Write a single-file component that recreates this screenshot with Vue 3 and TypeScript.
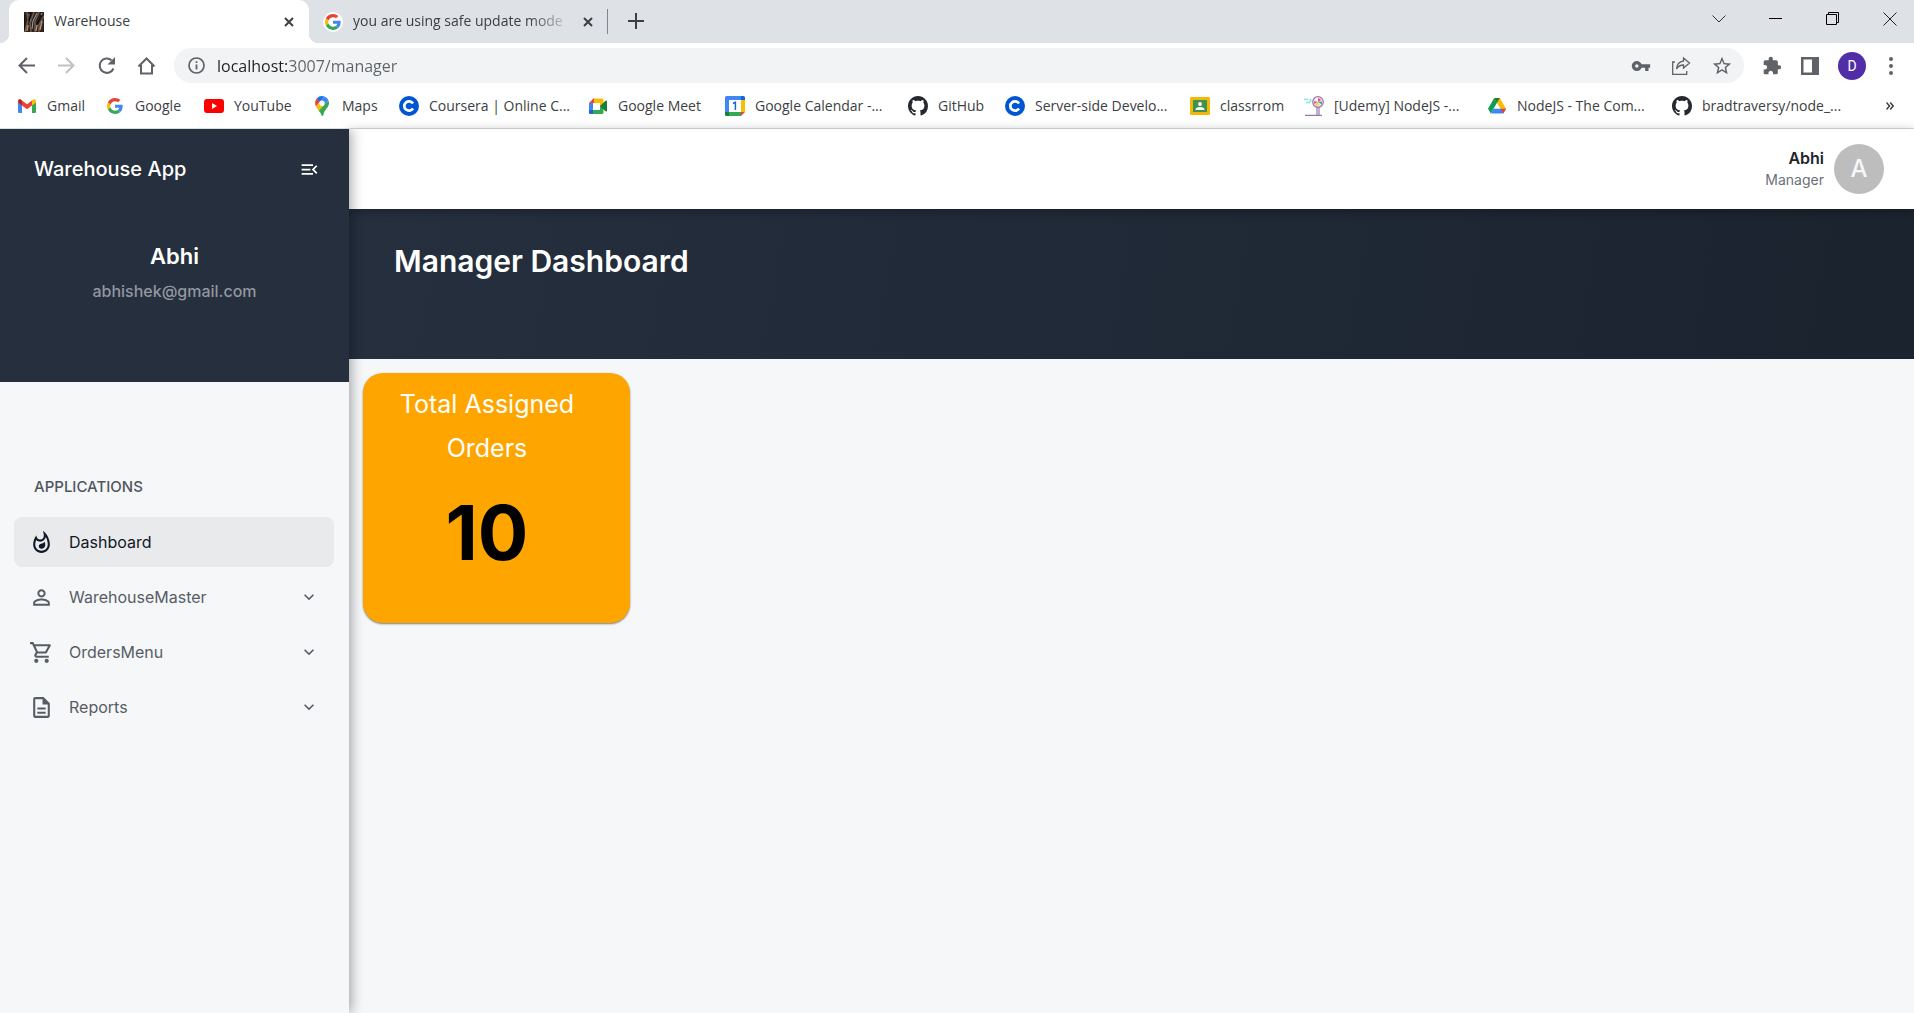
<script setup lang="ts">
import { ref } from 'vue'

interface Bookmark {
  icon: string
  label: string
}

interface MenuItem {
  label: string
  path: string
  expandable: boolean
}

const address = ref('localhost:3007/manager')
const selected = ref('Dashboard')
const collapsed = ref(false)

const bookmarks: Bookmark[] = [
  { icon: 'gmail', label: 'Gmail' },
  { icon: 'google', label: 'Google' },
  { icon: 'youtube', label: 'YouTube' },
  { icon: 'maps', label: 'Maps' },
  { icon: 'coursera', label: 'Coursera | Online C...' },
  { icon: 'meet', label: 'Google Meet' },
  { icon: 'calendar', label: 'Google Calendar -...' },
  { icon: 'github', label: 'GitHub' },
  { icon: 'coursera', label: 'Server-side Develo...' },
  { icon: 'classroom', label: 'classrrom' },
  { icon: 'udemy', label: '[Udemy] NodeJS -...' },
  { icon: 'drive', label: 'NodeJS - The Com...' },
  { icon: 'github', label: 'bradtraversy/node_...' },
]

const menu: MenuItem[] = [
  {
    label: 'Dashboard',
    expandable: false,
    path: 'M11.57 13.16c-1.36.28-2.17 1.16-2.17 2.41 0 1.34 1.11 2.42 2.49 2.42 2.05 0 3.71-1.66 3.71-3.71 0-1.07-.15-2.12-.46-3.12-.79 1.07-2.2 1.72-3.57 2zM13.5.67s.74 2.65.74 4.8c0 2.06-1.35 3.73-3.41 3.73-2.07 0-3.63-1.67-3.63-3.73l.03-.36C5.21 7.51 4 10.62 4 14c0 4.42 3.58 8 8 8s8-3.58 8-8C20 8.61 17.41 3.8 13.5.67zM12 20c-3.31 0-6-2.69-6-6 0-1.53.3-3.04.86-4.43 1.01 1.01 2.41 1.63 3.97 1.63 2.66 0 4.75-1.83 5.28-4.43C17.34 8.97 18 11.44 18 14c0 3.31-2.69 6-6 6z',
  },
  {
    label: 'WarehouseMaster',
    expandable: true,
    path: 'M12 5.9c1.16 0 2.1.94 2.1 2.1s-.94 2.1-2.1 2.1S9.9 9.16 9.9 8s.94-2.1 2.1-2.1m0 9c2.97 0 6.1 1.46 6.1 2.1v1.1H5.9V17c0-.64 3.13-2.1 6.1-2.1M12 4C9.79 4 8 5.79 8 8s1.79 4 4 4 4-1.79 4-4-1.79-4-4-4zm0 9c-2.67 0-8 1.34-8 4v3h16v-3c0-2.66-5.33-4-8-4z',
  },
  {
    label: 'OrdersMenu',
    expandable: true,
    path: 'M15.55 13c.75 0 1.41-.41 1.75-1.03l3.58-6.49c.37-.66-.11-1.48-.87-1.48H5.21l-.94-2H1v2h2l3.6 7.59-1.35 2.44C4.52 15.37 5.48 17 7 17h12v-2H7l1.1-2h7.45zM6.16 6h12.15l-2.76 5H8.53L6.16 6zM7 18c-1.1 0-1.99.9-1.99 2S5.9 22 7 22s2-.9 2-2-.9-2-2-2zm10 0c-1.1 0-1.99.9-1.99 2s.89 2 1.99 2 2-.9 2-2-.9-2-2-2z',
  },
  {
    label: 'Reports',
    expandable: true,
    path: 'M8 16h8v2H8zm0-4h8v2H8zm6-10H6c-1.1 0-2 .9-2 2v16c0 1.1.89 2 1.99 2H18c1.1 0 2-.9 2-2V8l-6-6zm4 18H6V4h7v5h5v11z',
  },
]
</script>

<template>
  <div class="window">
    <svg class="defs" width="0" height="0" aria-hidden="true">
      <symbol id="google" viewBox="-6 -6 60 60">
        <path fill="#EA4335" d="M24 9.5c3.54 0 6.71 1.22 9.21 3.6l6.85-6.85C35.9 2.38 30.47 0 24 0 14.62 0 6.51 5.38 2.56 13.22l7.98 6.19C12.43 13.72 17.74 9.5 24 9.5z" />
        <path fill="#4285F4" d="M46.98 24.55c0-1.57-.15-3.09-.38-4.55H24v9.02h12.94c-.58 2.96-2.26 5.48-4.78 7.18l7.73 6c4.51-4.18 7.09-10.36 7.09-17.65z" />
        <path fill="#FBBC05" d="M10.53 28.59c-.48-1.45-.76-2.99-.76-4.59s.27-3.14.76-4.59l-7.98-6.19C.92 16.46 0 20.12 0 24c0 3.88.92 7.54 2.56 10.78l7.97-6.19z" />
        <path fill="#34A853" d="M24 48c6.48 0 11.93-2.13 15.89-5.81l-7.73-6c-2.15 1.45-4.92 2.3-8.16 2.3-6.26 0-11.57-4.22-13.47-9.91l-7.98 6.19C6.51 42.62 14.62 48 24 48z" />
      </symbol>
      <symbol id="gmail" viewBox="0 0 20 20">
        <path fill="#4285f4" d="M1 6l4 3v8H2.300Q1 17 1 15.700z" />
        <path fill="#34a853" d="M15 9l4-3v9.700Q19 17 17.700 17H15z" />
        <path fill="#ea4335" d="M5 4.500l5 3.800 5-3.800v5L10 13.200 5 9.500z" />
        <path fill="#c5221f" d="M1 5.500Q1 3 3.200 3.100L5 4.500v5L1 6.500z" />
        <path fill="#fbbc04" d="M15 4.500l1.800-1.300Q19 3 19 5.500v1l-4 3z" />
      </symbol>
      <symbol id="youtube" viewBox="0 0 20 20">
        <rect y="3" width="20" height="14" rx="3" fill="#f00" />
        <path d="M8 7l5 3-5 3z" fill="#fff" />
      </symbol>
      <symbol id="maps" viewBox="0 0 20 20">
        <path d="M4.700 2.500L8.200 5.500 4 10.500Q2 6.500 4.700 2.500z" fill="#ea4335" />
        <path d="M4.700 2.500Q8-1 12.500.600L8 6z" fill="#1a73e8" />
        <path d="M12.500.600Q15.500 1.700 16.500 4.500L12 9.500 8 6z" fill="#4285f4" />
        <path d="M4 10.500L8 5.700 12 9.200 6.800 15z" fill="#fbbc04" />
        <path d="M16.500 4.500Q18 8.500 14.500 12.500 11.500 16 11 20H10Q9 17 6.800 14.700z" fill="#34a853" />
        <circle cx="10" cy="7.200" r="2.700" fill="#fff" />
      </symbol>
      <symbol id="coursera" viewBox="0 0 20 20">
        <circle cx="10" cy="10" r="10" fill="#0056d2" />
        <path d="M14 7.500A4.700 4.700 0 1 0 14 12.500" fill="none" stroke="#fff" stroke-width="2.700" />
      </symbol>
      <symbol id="meet" viewBox="0 0 20 20">
        <path d="M1 7l5-5v5z" fill="#ea4335" />
        <path d="M1 7h4v7H1z" fill="#4285f4" />
        <path d="M1 14h5v4H2.200Q1 18 1 16.700z" fill="#1967d2" />
        <path d="M6 2.500h8q1.500 0 1.500 1.500v5L12 11V7H6z" fill="#fbbc04" />
        <path d="M5 14h7v-4l3.500 1v5.500Q15.500 18 14 18H5z" fill="#34a853" />
        <path d="M12 10l5.500-5.200q1.500-.800 1.500.700v9q0 1.500-1.500.700z" fill="#188038" />
      </symbol>
      <symbol id="calendar" viewBox="0 0 20 20">
        <path d="M0 1.500Q0 0 1.500 0H16v4H4v12H0z" fill="#4285f4" />
        <path d="M16 0h2.500Q20 0 20 1.500V4h-4z" fill="#1967d2" />
        <path d="M16 4h4v12h-4z" fill="#fbbc04" />
        <path d="M4 16h12v4H4z" fill="#34a853" />
        <path d="M0 16h4v4H1.500Q0 20 0 18.500z" fill="#188038" />
        <path d="M16 16h4l-4 4z" fill="#ea4335" />
        <path d="M4 4h12v12H4z" fill="#fff" />
        <path d="M8 7.500l2.400-1.200V14" fill="none" stroke="#1967d2" stroke-width="1.500" />
      </symbol>
      <symbol id="github" viewBox="0 0 16 16">
        <path fill="#24292f" d="M8 0C3.580 0 0 3.580 0 8c0 3.540 2.290 6.530 5.470 7.590.4.070.55-.17.55-.38 0-.19-.01-.82-.01-1.490-2.010.37-2.530-.49-2.690-.94-.09-.23-.48-.94-.82-1.130-.28-.15-.68-.52-.01-.53.63-.01 1.080.58 1.230.82.72 1.210 1.870.87 2.330.66.07-.52.28-.87.51-1.070-1.780-.2-3.640-.89-3.640-3.950 0-.87.31-1.590.82-2.150-.08-.2-.36-1.020.08-2.120 0 0 .67-.21 2.200.82.64-.18 1.320-.27 2-.27s1.360.09 2 .27c1.530-1.040 2.200-.82 2.200-.82.44 1.100.16 1.920.08 2.120.51.56.82 1.270.82 2.150 0 3.070-1.870 3.750-3.650 3.950.29.25.54.73.54 1.480 0 1.070-.01 1.930-.01 2.200 0 .21.15.46.55.38A8.010 8.010 0 0 0 16 8c0-4.420-3.580-8-8-8z" />
      </symbol>
      <symbol id="classroom" viewBox="0 0 20 20">
        <rect y="1" width="20" height="18" rx="1.500" fill="#f6b704" />
        <rect x="3" y="4" width="14" height="12" fill="#3d9350" />
        <circle cx="10" cy="8" r="1.900" fill="#fff" />
        <path d="M5.500 14q0-3 4.500-3t4.500 3z" fill="#fff" />
      </symbol>
      <symbol id="udemy" viewBox="0 0 20 20">
        <circle cx="14" cy="6" r="5.300" fill="#ecdff0" stroke="#9a79b0" stroke-width="1.200" />
        <path d="M14 6l-3-3 3-1.500z" fill="#fff" />
        <path d="M14 6V2l3 2z" fill="#f4436c" />
        <path d="M14 6l4-.5v3z" fill="#2fb574" />
        <path d="M14 6l1 4-4-1z" fill="#ffd21f" />
        <path d="M14 6l-4 2V5z" fill="#e95a9b" />
        <path d="M0 3.500h4M2 6.500h4M6.500 3v3" stroke="#7fe2f0" stroke-width="1.700" />
        <path d="M13 11v8M15 11v8M1 19.300h17" stroke="#9a79b0" stroke-width="1.200" />
      </symbol>
      <symbol id="drive" viewBox="0 0 20 20">
        <path d="M7.200 2h5.600L10 6.800 3.800 17.500 1 12.700z" fill="#0f9d58" />
        <path d="M7.200 2h5.600l6.200 10.700h-5.500z" fill="#fbbc04" />
        <path d="M7.200 2h5.600L10 6.800z" fill="#188038" />
        <path d="M6.500 12.700H19l-2.800 4.800H3.800z" fill="#4285f4" />
        <path d="M13.500 12.700H19l-2.800 4.800z" fill="#ea4335" />
      </symbol>
    </svg>

    <header class="browser">
      <div class="tabstrip">
        <div class="tab active">
          <svg class="favicon" viewBox="0 0 20 20" aria-hidden="true">
            <path d="M0 0h20v20H0z" fill="#2b2220" />
            <path d="M3 0l1 8-3 12M10 0L6 11l1 9M15 0l-4 9v11M20 4l-5 9v7" fill="none" stroke="#6f5a4c" stroke-width="1.500" />
            <path d="M5 2l1 7M13 1L9 9l-1 8M18 1l-4 8" fill="none" stroke="#a9a09a" stroke-width="1" />
            <path d="M18 9l-2 9M13 13l-1 6M4 13l-1 6" fill="none" stroke="#b58e6d" stroke-width="1.500" />
            <path d="M0 3v15M7 0L5 9M17 3l-4 9" stroke="#0d0b0c" stroke-width="1.500" />
          </svg>
          <span class="tab-title">WareHouse</span>
          <button class="bare" aria-label="Close WareHouse tab">
            <svg width="10" height="10" viewBox="0 0 10 10"><path d="M1 1l8 8M9 1L1 9" stroke="#3c4043" stroke-width="2" /></svg>
          </button>
        </div>
        <div class="tab">
          <svg class="favicon round" aria-hidden="true"><use href="#google" /></svg>
          <span class="tab-title fade">you are using safe update mode</span>
          <button class="bare" aria-label="Close search tab">
            <svg width="10" height="10" viewBox="0 0 10 10"><path d="M1 1l8 8M9 1L1 9" stroke="#3c4043" stroke-width="2" /></svg>
          </button>
        </div>
        <button class="bare new-tab" aria-label="New tab">
          <svg width="16" height="16" viewBox="0 0 16 16"><path d="M8 0v16M0 8h16" stroke="#3c4043" stroke-width="2" /></svg>
        </button>
        <div class="window-controls">
          <button class="bare" aria-label="Search tabs">
            <svg width="14" height="14" viewBox="0 0 14 14"><path d="M.5 3.500L7 10 13.500 3.500" fill="none" stroke="#333" /></svg>
          </button>
          <button class="bare" aria-label="Minimize">
            <svg width="14" height="14" viewBox="0 0 14 14"><path d="M0 6.500h13" stroke="#000" /></svg>
          </button>
          <button class="bare" aria-label="Restore">
            <svg width="14" height="14" viewBox="0 0 14 14"><path d="M.5 2.500h10v10H.5zM2.500 2.500v-2h10v10h-2" fill="none" stroke="#000" /></svg>
          </button>
          <button class="bare" aria-label="Close window">
            <svg width="14" height="14" viewBox="0 0 14 14"><path d="M.5 .5l13 13M13.500 .5l-13 13" stroke="#222" /></svg>
          </button>
        </div>
      </div>

      <div class="toolbar">
        <div class="nav">
          <button class="bare" aria-label="Back">
            <svg width="20" height="20" viewBox="0 0 20 20" fill="none" stroke="#5f6368" stroke-width="2"><path d="M18 9.500H3M10 2L2.500 9.500 10 17" /></svg>
          </button>
          <button class="bare" aria-label="Forward" disabled>
            <svg width="20" height="20" viewBox="0 0 20 20" fill="none" stroke="#bfc1c4" stroke-width="2"><path d="M1 9.500h15M9 2l7.500 7.500L9 17" /></svg>
          </button>
          <button class="bare" aria-label="Reload">
            <svg width="20" height="20" viewBox="0 0 20 20"><path d="M16.500 12.500A7.200 7.200 0 1 1 14.600 4.200" fill="none" stroke="#5f6368" stroke-width="2" /><path d="M18 1v7.500h-7.500z" fill="#5f6368" /></svg>
          </button>
          <button class="bare" aria-label="Home">
            <svg width="20" height="20" viewBox="0 0 20 20" fill="none" stroke="#5f6368" stroke-width="2"><path d="M1.500 10.500L9.500 2.500l8 8M4 9v8.500h11V9" /></svg>
          </button>
        </div>
        <div class="omnibox">
          <svg width="17" height="17" viewBox="0 0 17 17" aria-hidden="true"><circle cx="8.500" cy="8.500" r="7.500" fill="none" stroke="#5f6368" stroke-width="1.700" /><path d="M8.500 7.500v5M8.500 4.300v1.800" stroke="#5f6368" stroke-width="1.800" /></svg>
          <input v-model="address" class="address" type="text" aria-label="Address" spellcheck="false" />
          <div class="box-actions">
            <button class="bare" aria-label="Passwords">
              <svg width="20" height="20" viewBox="0 0 24 24"><path fill="#5f6368" d="M12.650 10C11.830 7.670 9.610 6 7 6c-3.310 0-6 2.690-6 6s2.690 6 6 6c2.610 0 4.830-1.670 5.650-4H17v4h4v-4h2v-4H12.650zM7 14c-1.100 0-2-.9-2-2s.9-2 2-2 2 .9 2 2-.9 2-2 2z" /></svg>
            </button>
            <button class="bare" aria-label="Share">
              <svg width="20" height="20" viewBox="0 0 20 20" fill="none" stroke="#5f6368" stroke-width="1.300"><path d="M4 6H1.700v12.300h14V15" /><path d="M12.500 2l6 5-6 5V9q-4.500 0-7 4 .5-7 7-8z" /></svg>
            </button>
            <button class="bare" aria-label="Bookmark this page">
              <svg width="22" height="22" viewBox="0 0 24 24"><path fill="#5f6368" d="M22 9.240l-7.190-.62L12 2 9.190 8.630 2 9.240l5.460 4.730L5.820 21 12 17.270 18.180 21l-1.630-7.030L22 9.240zM12 15.400l-3.760 2.270 1-4.280-3.320-2.880 4.380-.38L12 6.100l1.710 4.040 4.380.38-3.320 2.880 1 4.280L12 15.400z" /></svg>
            </button>
          </div>
        </div>
        <div class="extensions">
          <button class="bare" aria-label="Extensions">
            <svg width="20" height="20" viewBox="0 0 24 24"><path fill="#5f6368" d="M20.500 11H19V7c0-1.100-.9-2-2-2h-4V3.500C13 2.120 11.880 1 10.500 1S8 2.120 8 3.500V5H4c-1.100 0-1.990.9-1.990 2v3.800H3.500c1.490 0 2.700 1.210 2.700 2.700s-1.210 2.700-2.700 2.700H2V20c0 1.100.9 2 2 2h3.800v-1.500c0-1.490 1.210-2.700 2.700-2.700 1.490 0 2.700 1.210 2.700 2.700V22H17c1.100 0 2-.9 2-2v-4h1.500c1.380 0 2.500-1.120 2.500-2.500S21.880 11 20.500 11z" /></svg>
          </button>
          <button class="bare" aria-label="Side panel">
            <svg width="18" height="18" viewBox="0 0 18 18"><path fill="#5f6368" fill-rule="evenodd" d="M0 0h18v18H0zM2.500 2.500v13H11v-13z" /></svg>
          </button>
          <button class="profile" aria-label="Profile D">D</button>
          <button class="bare" aria-label="Browser menu">
            <svg width="4" height="18" viewBox="0 0 4 18" fill="#5f6368"><circle cx="2" cy="2" r="2" /><circle cx="2" cy="9" r="2" /><circle cx="2" cy="16" r="2" /></svg>
          </button>
        </div>
      </div>

      <nav class="bookmarks" aria-label="Bookmarks">
        <a v-for="(item, i) in bookmarks" :key="i" class="bookmark" href="#">
          <svg width="20" height="20" aria-hidden="true"><use :href="'#' + item.icon" /></svg>
          <span>{{ item.label }}</span>
        </a>
        <button class="bare more" aria-label="More bookmarks">
          <svg width="8" height="8" viewBox="0 0 8 8" fill="none" stroke="#3c4043" stroke-width="1.500"><path d="M.5 .5L3.500 4 .5 7.500M4.200 .5l3 3.500-3 3.500" /></svg>
        </button>
      </nav>
    </header>

    <div class="app">
      <aside class="sidebar">
        <div class="profile-panel">
          <div class="brand-row">
            <span class="brand">Warehouse App</span>
            <button class="bare" aria-label="Toggle navigation" @click="collapsed = !collapsed">
              <svg width="21" height="21" viewBox="0 0 24 24"><path fill="#fff" d="M3 18h13v-2H3v2zm0-5h10v-2H3v2zm0-7v2h13V6H3zm18 9.590L17.420 12 21 8.410 19.590 7l-5 5 5 5L21 15.590z" /></svg>
            </button>
          </div>
          <div class="account">
            <strong>Abhi</strong>
            <span>abhishek@gmail.com</span>
          </div>
        </div>
        <nav class="menu" aria-label="Applications">
          <h2>APPLICATIONS</h2>
          <button
            v-for="item in menu"
            :key="item.label"
            class="menu-item"
            :class="{ selected: selected === item.label }"
            @click="selected = item.label"
          >
            <svg width="25" height="25" viewBox="0 0 24 24" aria-hidden="true"><path fill="currentColor" :d="item.path" /></svg>
            <span>{{ item.label }}</span>
            <svg v-if="item.expandable" width="20" height="20" viewBox="0 0 24 24" aria-hidden="true"><path fill="currentColor" d="M16.590 8.590L12 13.170 7.410 8.590 6 10l6 6 6-6z" /></svg>
          </button>
        </nav>
      </aside>

      <main class="content">
        <div class="topbar">
          <div class="user">
            <strong>Abhi</strong>
            <span>Manager</span>
          </div>
          <div class="avatar">A</div>
        </div>
        <div class="hero">
          <h1>Manager Dashboard</h1>
        </div>
        <div class="cards">
          <section class="card">
            <h2>Total Assigned Orders</h2>
            <p>10</p>
          </section>
        </div>
      </main>
    </div>
  </div>
</template>

<style>
body {
  margin: 0;
}
</style>

<style scoped>
* {
  box-sizing: border-box;
}

.window {
  display: flex;
  flex-direction: column;
  min-height: 100vh;
  font-family: Inter, "Liberation Sans", sans-serif;
}

.defs {
  position: absolute;
}

svg {
  display: block;
  flex: none;
}

button {
  font: inherit;
  cursor: pointer;
}

.bare {
  display: grid;
  flex: none;
  place-items: center;
  padding: 0;
  border: 0;
  background: none;
}

/* Browser chrome */
.browser {
  font-family: "Open Sans", "Noto Sans", sans-serif;
  background: #fff;
  border-bottom: 1px solid #dadce0;
}

.tabstrip {
  display: flex;
  align-items: stretch;
  height: 43px;
  padding-left: 9px;
  background: #dee1e6;
}

.tab {
  display: flex;
  align-items: center;
  width: 299px;
  padding: 0 15px 0 14px;
  background: linear-gradient(#80868b, #80868b) right center / 1px 25px no-repeat;
}

.tab.active {
  position: relative;
  width: 300px;
  padding: 0 15px;
  border-radius: 10px 10px 0 0;
  background: #fff;
}

/* Flared feet of the selected tab */
.tab.active::before,
.tab.active::after {
  position: absolute;
  bottom: 0;
  width: 9px;
  height: 9px;
  content: "";
}

.tab.active::before {
  right: 100%;
  background: radial-gradient(circle at 0 0, transparent 9px, #fff 9px);
}

.tab.active::after {
  left: 100%;
  background: radial-gradient(circle at 100% 0, transparent 9px, #fff 9px);
}

.favicon {
  width: 20px;
  height: 20px;
  margin-right: 10px;
}

.favicon.round {
  border-radius: 50%;
  background: #fff;
}

.tab-title {
  flex: 1;
  margin-right: 10px;
  padding-bottom: 2px;
  color: #3c4043;
  font-size: 14px;
  line-height: 20px;
  white-space: nowrap;
}

.fade {
  mask-image: linear-gradient(to right, #000 calc(100% - 44px), transparent);
}

.new-tab {
  width: 55px;
  padding-bottom: 1px;
}

.window-controls {
  display: flex;
  margin-left: auto;
  padding-bottom: 6px;
}

.window-controls .bare {
  width: 57px;
}

.window-controls .bare:last-child {
  width: 53px;
  padding-left: 5px;
}

.toolbar {
  display: flex;
  align-items: center;
  height: 45px;
  padding-right: 21px;
}

.nav {
  display: flex;
  gap: 20px;
  padding: 0 17px;
}

.omnibox {
  display: flex;
  flex: 1;
  align-items: center;
  height: 35px;
  padding: 0 11px 0 14px;
  border-radius: 18px;
  background: #f1f3f4;
}

.address {
  flex: 1;
  min-width: 0;
  margin-left: 12px;
  padding: 0;
  border: 0;
  outline: 0;
  background: linear-gradient(to right, #202124 71px, #5f6368 71px);
  background-clip: text;
  color: transparent;
  font: 16px/24px "Open Sans", "Noto Sans", sans-serif;
}

.box-actions {
  display: flex;
  align-items: center;
  gap: 20px;
}

.extensions {
  display: flex;
  align-items: center;
  gap: 19px;
  padding-left: 18px;
}

.extensions .bare:last-child {
  padding-left: 4px;
}

.profile {
  width: 28px;
  height: 28px;
  padding: 0;
  border: 0;
  border-radius: 50%;
  background: #512da8;
  color: #fff;
  font: 14px/28px Roboto, sans-serif;
}

.bookmarks {
  display: grid;
  grid-template-columns: 88px 99px 108px 87px 189px 137px 183px 97px 185px 114px 183px 185px 180px 1fr;
  align-items: center;
  height: 40px;
  padding: 0 20px 4px 17px;
}

.bookmark {
  display: flex;
  align-items: center;
  gap: 10px;
  color: #3c4043;
  font-size: 14px;
  line-height: 20px;
  text-decoration: none;
  white-space: nowrap;
}

.more {
  justify-self: end;
}

/* Warehouse application */
.app {
  display: flex;
  flex: 1;
  background: #f5f7f9;
}

.sidebar {
  z-index: 1;
  flex: none;
  width: 349px;
  background: #f5f7f9;
  box-shadow: 2px 0 12px rgba(0, 0, 0, 0.36);
  clip-path: inset(0 -24px 0 0);
}

.profile-panel {
  height: 253px;
  background: #252f3e;
  color: #fff;
}

.brand-row {
  display: flex;
  align-items: center;
  justify-content: space-between;
  height: 80px;
  padding: 0 29px 0 34px;
}

.brand {
  font-size: 20px;
  font-weight: 500;
  line-height: 28px;
}

.account {
  display: flex;
  flex-direction: column;
  align-items: center;
  padding-top: 30px;
}

.account strong {
  font-size: 22px;
  font-weight: 600;
  line-height: 34px;
}

.account span {
  margin-top: 4px;
  color: #92979e;
  font-size: 16px;
  font-weight: 500;
  line-height: 28px;
}

.menu {
  display: flex;
  flex-direction: column;
  gap: 5px;
  padding: 92px 15px 0 14px;
}

.menu h2 {
  margin: 0;
  padding: 0 20px 13px;
  color: #51565e;
  font-size: 15px;
  font-weight: 500;
  line-height: 25px;
}

.menu-item {
  display: flex;
  align-items: center;
  height: 50px;
  padding: 0 15px;
  border: 0;
  border-radius: 8px;
  background: none;
  color: #585d65;
  font-size: 16px;
  line-height: 24px;
  text-align: left;
}

.menu-item span {
  flex: 1;
  margin-left: 15px;
}

.menu-item.selected {
  background: #e8eaec;
  color: #111827;
}

.content {
  display: flex;
  flex: 1;
  flex-direction: column;
  min-width: 0;
}

.topbar {
  z-index: 0;
  display: flex;
  align-items: center;
  justify-content: flex-end;
  gap: 10px;
  height: 80px;
  padding: 0 30px;
  background: #fff;
  box-shadow: 0 2px 10px rgba(0, 0, 0, 0.3);
}

.user {
  display: flex;
  flex-direction: column;
  align-items: flex-end;
  color: #212529;
}

.user strong {
  font-size: 16px;
  font-weight: 600;
  line-height: 22px;
}

.user span {
  color: #6b7078;
  font-size: 14px;
  line-height: 22px;
}

.avatar {
  width: 50px;
  height: 50px;
  border-radius: 50%;
  background: #bdbdbd;
  color: #f5f7f9;
  font-size: 24px;
  font-weight: 500;
  line-height: 50px;
  text-align: center;
}

.hero {
  height: 150px;
  padding: 30px 45px;
  background: linear-gradient(100deg, #252f3e, #1b232f);
}

.hero h1 {
  margin: 0;
  color: #fff;
  font-size: 30px;
  font-weight: 600;
  line-height: 45px;
}

.cards {
  display: flex;
  padding: 14px;
}

.card {
  width: 267px;
  height: 250px;
  padding: 9px 35px 0 16px;
  border-radius: 20px;
  background: #ffa500;
  box-shadow: 0 1px 2px rgba(0, 0, 0, 0.5);
  text-align: center;
}

.card h2 {
  margin: 0;
  color: #fff;
  font-size: 25px;
  font-weight: 400;
  line-height: 44px;
}

.card p {
  margin: 18px 0 0;
  font-size: 75px;
  font-weight: 700;
  line-height: 90px;
}
</style>
